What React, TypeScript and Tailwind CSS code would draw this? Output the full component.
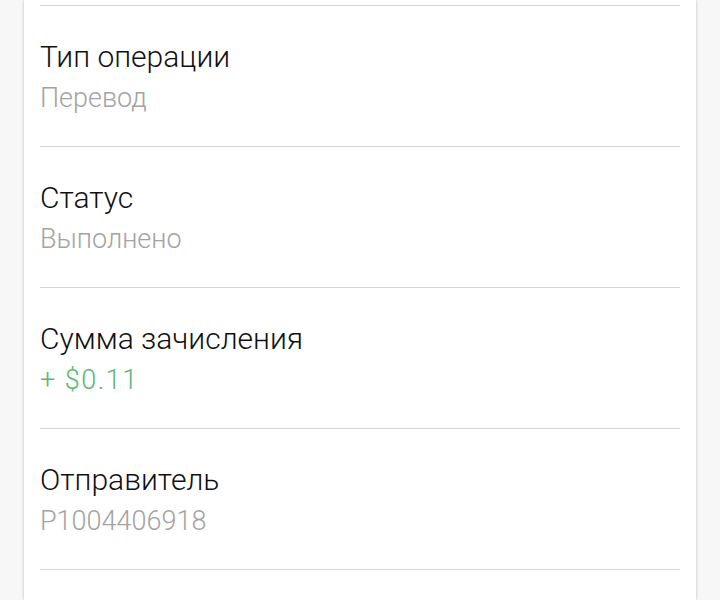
const rows = [
  { label: "Тип операции", value: "Перевод", tone: "text-[#a3a3a3]" },
  { label: "Статус", value: "Выполнено", tone: "text-[#a3a3a3]" },
  { label: "Сумма зачисления", value: "+\u00a0$0.11", tone: "text-[#5bb771] tracking-[1.5px]" },
  { label: "Отправитель", value: "P1004406918", tone: "text-[#a3a3a3]" },
];

export default function App() {
  return (
    <div className="h-[600px] overflow-hidden bg-[#f7f7f7] px-6 font-['Roboto',sans-serif]">
      <div className="h-full bg-white shadow-[0_0_3px_rgba(0,0,0,0.25)]">
        <div className="mx-4">
          <div className="h-[6px] border-b border-[#d6d6d6]" />
          {rows.map((row) => (
            <div key={row.label} className="h-[141px] border-b border-[#d6d6d6] pt-[30px]">
              <p className="text-[30px] font-light leading-[42px] text-[#111]">{row.label}</p>
              <p className={`text-[27px] font-light leading-[40px] ${row.tone}`}>{row.value}</p>
            </div>
          ))}
        </div>
      </div>
    </div>
  );
}
